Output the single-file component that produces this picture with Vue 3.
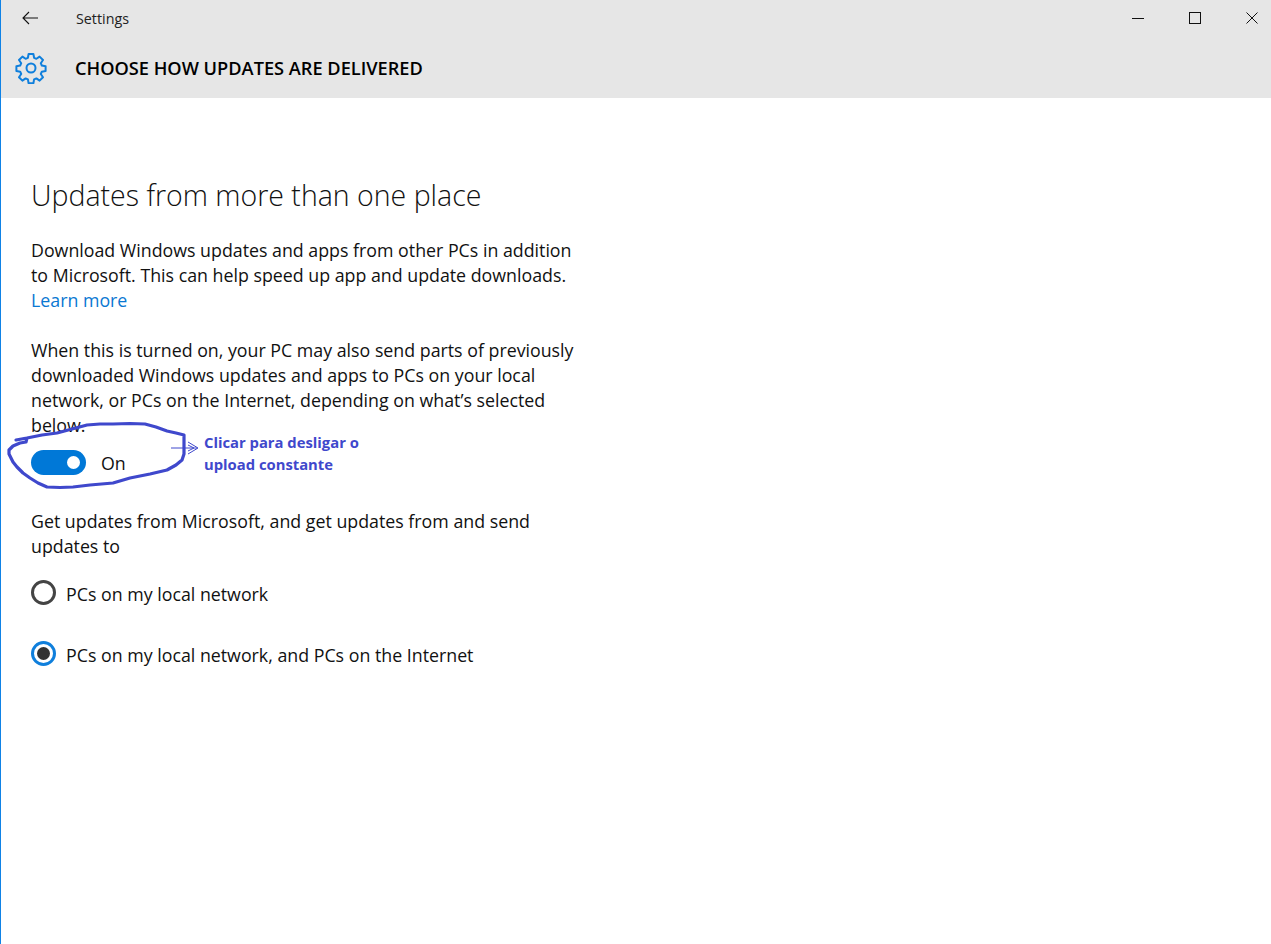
<script setup>
const options = [
  { label: 'PCs on my local network', checked: false },
  { label: 'PCs on my local network, and PCs on the Internet', checked: true },
]
</script>

<template>
  <div class="window">
    <header class="head">
      <div class="titlebar">
        <button class="back" aria-label="Back">
          <svg width="16" height="14" viewBox="0 0 16 14"><path d="M7 1 1 7l6 6M1 7h15" fill="none" stroke="#111" stroke-width="1.1" /></svg>
        </button>
        <span class="apptitle">Settings</span>
        <div class="controls">
          <svg class="ctl" width="12" height="12" viewBox="0 0 12 12"><path d="M0 6.5h12" stroke="#111" stroke-width="1" /></svg>
          <svg class="ctl" width="12" height="12" viewBox="0 0 12 12"><rect x=".5" y=".5" width="11" height="11" fill="none" stroke="#111" stroke-width="1" /></svg>
          <svg class="ctl" width="12" height="12" viewBox="0 0 12 12"><path d="M.5.5l11 11M11.500.5l-11 11" fill="none" stroke="#111" stroke-width="1" /></svg>
        </div>
      </div>
      <div class="pagehead">
        <svg class="gear" width="32" height="32" viewBox="0 0 32 32">
          <circle cx="16" cy="16" r="4.500" fill="none" stroke="#0f7fdc" stroke-width="2" />
          <path d="M13.600 2h4.800l.7 3.800 2.300 1 3.200-2.200 3.400 3.400-2.200 3.200 1 2.300 3.800.7v4.800l-3.800.7-1 2.300 2.200 3.200-3.400 3.400-3.200-2.200-2.300 1-.7 3.800h-4.800l-.7-3.800-2.300-1-3.200 2.200-3.400-3.400 2.200-3.200-1-2.300-3.800-.7v-4.800l3.800-.7 1-2.300-2.200-3.200 3.400-3.400 3.200 2.200 2.300-1z" fill="none" stroke="#0f7fdc" stroke-width="2" stroke-linejoin="round" />
        </svg>
        <h1>CHOOSE HOW UPDATES ARE DELIVERED</h1>
      </div>
    </header>

    <main class="content">
      <h2>Updates from more than one place</h2>
      <p class="para">Download Windows updates and apps from other PCs in addition<br />to Microsoft. This can help speed up app and update downloads.<br /><a class="link">Learn more</a></p>
      <p class="para second">When this is turned on, your PC may also send parts of previously<br />downloaded Windows updates and apps to PCs on your local<br />network, or PCs on the Internet, depending on what’s selected<br />below.</p>
      <div class="toggle-row">
        <span class="toggle"><span class="knob"></span></span>
        <span class="state">On</span>
      </div>
      <p class="para third">Get updates from Microsoft, and get updates from and send<br />updates to</p>
      <div class="radios">
        <label v-for="o in options" :key="o.label" class="radio-row">
          <span class="radio" :class="{ checked: o.checked }"></span>
          <span class="radio-text">{{ o.label }}</span>
        </label>
      </div>
    </main>

    <svg class="scribble" width="210" height="80" viewBox="0 410 210 80">
      <path d="M16 440 27 438 26 442 20 443 13 446 9 450 9 454 13 462 17 467 23 473 30 478 38 483 47 487 60 487.500 73 487 90 485 113 483 130 478 150 474 167 470 176 465 182 460 184 454 184 447 184 440 184 435 176 433 167 431 156 427 145 424 130 423.500 113 424 100 424 87 425 72 429 57 433 42 435 27 438" fill="none" stroke="#3f48cc" stroke-width="3.200" stroke-linejoin="round" stroke-linecap="round" />
      <path d="M171 448h26M188 442l10 6-10 6M188 445l6 3-6 3" fill="none" stroke="#3f48cc" stroke-width="1" />
    </svg>
    <div class="note">Clicar para desligar o<br />upload constante</div>
  </div>
</template>

<style scoped>
.window {
  position: relative;
  box-sizing: border-box;
  width: 1271px;
  height: 944px;
  overflow: hidden;
  background: #fff;
  border-left: 1px solid #0f82e6;
  color: #111;
  font-family: "Open Sans", "Noto Sans", sans-serif;
  font-size: 17.800px;
}
.head { background: #e6e6e6; height: 98px; }
.titlebar { display: flex; align-items: center; height: 36px; }
.back { width: 59px; height: 36px; padding: 0 0 0 21px; background: none; border: 0; display: flex; align-items: center; }
.apptitle { margin-left: 16px; font-size: 14.300px; color: #222; }
.controls { margin-left: auto; display: flex; align-items: center; gap: 45px; padding-right: 13px; }
.pagehead { display: flex; align-items: center; height: 64px; padding-left: 14px; }
.gear { margin-right: 28px; }
h1 { margin: 0; font-size: 18.200px; font-weight: 600; color: #000; }
.content { padding: 76px 0 0 30px; }
h2 { margin: 0; font-size: 28.500px; font-weight: 300; line-height: 42px; color: #111; }
.para { margin: 22px 0 0; line-height: 25px; white-space: nowrap; }
.second { margin-top: 25px; }
.third { margin-top: 22px; }
.link { color: #0a78d2; }
.toggle-row { display: flex; align-items: center; height: 50px; margin-top: -1px; gap: 15px; }
.state { position: relative; top: 1px; }
.toggle { position: relative; width: 55px; height: 25px; border-radius: 13px; background: #0078d7; }
.knob { position: absolute; right: 6px; top: 6px; width: 13px; height: 13px; border-radius: 50%; background: #fff; }
.radios { margin-top: 21px; display: flex; flex-direction: column; gap: 36px; }
.radio-row { display: flex; align-items: center; gap: 10px; height: 25px; }
.radio-text { position: relative; top: 1px; }
.radio { box-sizing: border-box; width: 25px; height: 25px; border-radius: 50%; border: 3px solid #444; background: #fff; position: relative; }
.radio.checked { border-color: #0f7fdc; }
.radio.checked::after { content: ""; position: absolute; left: 3px; top: 3px; width: 13px; height: 13px; border-radius: 50%; background: #333; }
.scribble { position: absolute; left: -1px; top: 410px; }
.note { position: absolute; left: 203px; top: 431px; font-size: 14.800px; line-height: 22px; font-weight: 700; color: #3f48cc; white-space: nowrap; }
</style>
